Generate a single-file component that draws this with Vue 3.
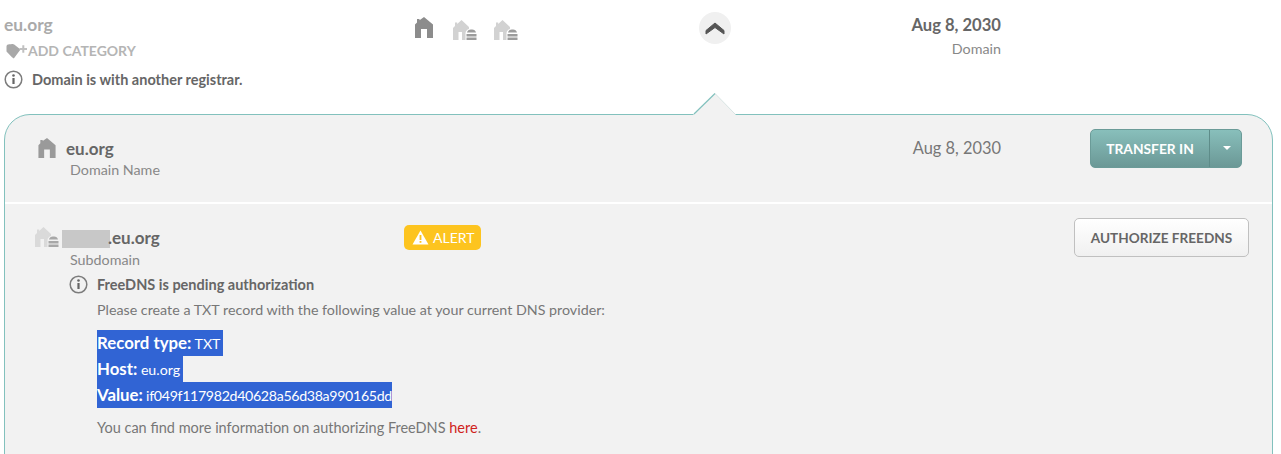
<script setup>
const homePath = 'M0 21V7.500L2 5.500V2h2.500v1.200L9 0l9 7.500V21h-6v-9H6v9z'
const housePath = 'M0 20V8L2 6V2.500h2.200V4L8.500 0 16 7v2c-2 .5-3.200 2-3.500 4v7H9v-8H5.500v8z'
const stackPath = 'M14 12.500c.4-1.800 2-3 3.800-3h1.400c1.800 0 3.400 1.200 3.800 3zM13.500 14h10v2.500h-10zM13.500 17.500h10V20h-10z'
const records = [
  { label: 'Record type:', value: 'TXT' },
  { label: 'Host:', value: 'eu.org' },
  { label: 'Value:', value: 'if049f117982d40628a56d38a990165dd' }
]
</script>

<template>
  <div class="page">
    <div class="summary">
      <div class="summary-name">
        <div class="domain">eu.org</div>
        <div class="add-category">
          <svg width="22" height="15" viewBox="0 0 22 15">
            <path d="M.5 2.500C.5 1 1.800.3 3.200.3h2c.9-.5 2.100-.4 3 .3l6.300 4.900-6.700 9-1.800-1.300L.5 7.500z" fill="#a8a8a8" />
            <path d="M13.500 5h7.500M17.300 1.300v7.500" stroke="#c0c0c0" stroke-width="2" fill="none" />
          </svg>
          <span>ADD CATEGORY</span>
        </div>
        <div class="notice">
          <svg class="info" width="19" height="19" viewBox="0 0 19 19">
            <circle cx="9.500" cy="9.500" r="8.300" fill="none" stroke="#7d7d7d" stroke-width="1.500" />
            <rect x="8.400" y="8" width="2.200" height="6" fill="#666" />
            <circle cx="9.500" cy="5.500" r="1.300" fill="#666" />
          </svg>
          <span>Domain is with another registrar.</span>
        </div>
      </div>
      <div class="summary-icons">
        <svg width="18" height="21" viewBox="0 0 18 21"><path :d="homePath" fill="#8c8c8c" /></svg>
        <svg v-for="n in 2" :key="n" class="sub-icon" width="26" height="20" viewBox="0 0 24 20">
          <path :d="housePath" fill="#d2d2d2" />
          <path :d="stackPath" fill="#9c9c9c" />
        </svg>
      </div>
      <button class="collapse">
        <svg width="20" height="13" viewBox="0 0 20 13">
          <path d="M10 1l9 7.500v3.500L10 5.500 1 12V8.500z" fill="#555" stroke="#555" stroke-linejoin="round" />
        </svg>
      </button>
      <div class="summary-expiry">
        <div class="date">Aug 8, 2030</div>
        <div class="kind">Domain</div>
      </div>
    </div>

    <div class="panel">
      <svg class="notch" width="44" height="22" viewBox="0 0 44 22">
        <path d="M0 22L22 .5 43 22z" fill="#f2f2f2" />
        <path d="M22 .5L42 21" fill="none" stroke="#d8e4e3" />
        <path d="M1 21L22 .5" fill="none" stroke="#82c1bd" stroke-width="1.200" />
      </svg>
      <div class="section section-domain">
        <div class="name-col">
          <div class="name-line">
            <svg width="18" height="20" viewBox="0 0 18 21"><path :d="homePath" fill="#9a9a9a" /></svg>
            <span class="name">eu.org</span>
          </div>
          <div class="kind kind-indent">Domain Name</div>
        </div>
        <div class="panel-date">Aug 8, 2030</div>
        <div class="split-button">
          <span class="split-main">TRANSFER IN</span>
          <span class="split-caret"></span>
        </div>
      </div>

      <div class="section section-sub">
        <div class="sub-head">
          <div class="name-col sub-name">
            <div class="name-line">
              <svg width="26" height="20" viewBox="0 0 24 20">
                <path :d="housePath" fill="#dadada" />
                <path :d="stackPath" fill="#a8a8a8" />
              </svg>
              <span class="name"><span class="redacted"></span>.eu.org</span>
            </div>
            <div class="kind kind-sub">Subdomain</div>
          </div>
          <div class="alert">
            <svg width="17" height="15" viewBox="0 0 17 15">
              <path d="M8.500 .5l8 14H.5z" fill="#fff" />
              <rect x="7.600" y="5" width="1.800" height="5" fill="#fdc41f" />
              <rect x="7.600" y="11" width="1.800" height="1.800" fill="#fdc41f" />
            </svg>
            <span>ALERT</span>
          </div>
          <button class="authorize">AUTHORIZE FREEDNS</button>
        </div>

        <div class="pending">
          <svg class="info" width="19" height="19" viewBox="0 0 19 19">
            <circle cx="9.500" cy="9.500" r="8.300" fill="none" stroke="#7d7d7d" stroke-width="1.500" />
            <rect x="8.400" y="8" width="2.200" height="6" fill="#666" />
            <circle cx="9.500" cy="5.500" r="1.300" fill="#666" />
          </svg>
          <div class="pending-body">
            <div class="pending-title">FreeDNS is pending authorization</div>
            <p class="pending-text">Please create a TXT record with the following value at your current DNS provider:</p>
            <div class="records">
              <div v-for="r in records" :key="r.label" class="record">
                <b>{{ r.label }}</b> {{ r.value }}
              </div>
            </div>
            <p class="pending-more">You can find more information on authorizing FreeDNS <a class="link">here</a>.</p>
          </div>
        </div>
      </div>
    </div>
  </div>
</template>

<style>
html, body {
  margin: 0;
  background: #fff;
  overflow: hidden;
}
</style>

<style scoped>
.page {
  width: 1281px;
  height: 454px;
  overflow: hidden;
  font-family: Lato, "Open Sans", sans-serif;
  color: #777;
  font-size: 14px;
}

.summary {
  display: flex;
  height: 114px;
  padding-left: 4px;
  box-sizing: border-box;
}

.summary-name {
  width: 410px;
  padding-top: 15px;
}

.domain {
  font-size: 17.400px;
  font-weight: 700;
  line-height: 20px;
  color: #aaa;
}

.add-category {
  display: flex;
  align-items: center;
  margin-top: 7px;
  padding-left: 2px;
  font-size: 14px;
  font-weight: 700;
  line-height: 18px;
  color: #b5b5b5;
}

.notice {
  display: flex;
  align-items: center;
  gap: 9px;
  margin-top: 10px;
  font-weight: 700;
  font-size: 14.500px;
  color: #666;
}

.summary-icons {
  display: flex;
  align-items: flex-start;
  width: 284px;
  margin-left: 1px;
  padding-top: 17px;
}

.sub-icon {
  margin: 3px 0 0 19px;
}

.sub-icon + .sub-icon {
  margin-left: 15px;
}

.collapse {
  width: 32px;
  height: 32px;
  margin-top: 12px;
  padding: 0;
  border: 0;
  border-radius: 50%;
  background: #f0f0f0;
  display: flex;
  align-items: center;
  justify-content: center;
}

.summary-expiry {
  width: 270px;
  padding-top: 15px;
  text-align: right;
}

.date {
  font-size: 16.600px;
  font-weight: 700;
  line-height: 20px;
  color: #666;
}

.kind {
  font-size: 14.300px;
  line-height: 18px;
  margin-top: 5px;
  color: #888;
}

.panel {
  position: relative;
  width: 1269px;
  margin-left: 4px;
  box-sizing: border-box;
  height: 400px;
  background: #f2f2f2;
  border: 1px solid #82c1bd;
  border-radius: 26px 26px 0 0;
}

.notch {
  position: absolute;
  top: -22px;
  left: 688px;
}

.section-domain {
  display: flex;
  align-items: flex-start;
  height: 89px;
  box-sizing: border-box;
  border-bottom: 2px solid #fff;
  padding: 21px 30px 0 33px;
}

.name-col {
  width: 380px;
}

.name-line {
  display: flex;
  align-items: center;
  height: 24px;
}

.name {
  font-size: 17px;
  font-weight: 700;
  color: #666;
  margin-left: 10px;
}

.kind-indent {
  margin: 1px 0 0 32px;
}

.panel-date {
  flex: 1;
  text-align: right;
  font-size: 16.400px;
  line-height: 24px;
  padding: 0 89px 0 0;
  color: #777;
}

.split-button {
  display: flex;
  width: 152px;
  height: 39px;
  margin-top: -7px;
  border: 1px solid #6b9b98;
  box-sizing: border-box;
  border-radius: 5px;
  background: linear-gradient(#88bfbb, #6b9896);
  color: #fff;
  font-size: 13.800px;
  font-weight: 700;
  line-height: 37px;
}

.split-main {
  width: 118px;
  text-align: center;
  border-right: 1px solid #5e8c89;
}

.split-caret {
  width: 0;
  height: 0;
  margin: 16px 0 0 13px;
  border: 4px solid transparent;
  border-top-color: #fff;
  border-bottom: 0;
}

.section-sub {
  padding: 14px 23px 0 29px;
}

.sub-head {
  display: flex;
  align-items: flex-start;
  height: 53px;
}

.sub-name {
  width: 370px;
  padding-top: 7px;
}

.sub-name .name {
  margin-left: 2px;
}

.sub-name svg {
  flex-shrink: 0;
}

.redacted {
  display: inline-block;
  width: 48px;
  height: 18px;
  margin-right: -2px;
  vertical-align: -4px;
  background: #c8c8c8;
}

.kind-sub {
  margin: 2px 0 0 36px;
}

.alert {
  display: flex;
  align-items: center;
  gap: 4px;
  width: 77px;
  height: 25px;
  margin-top: 7px;
  padding-left: 8px;
  box-sizing: border-box;
  border-radius: 5px;
  background: #fdc41f;
  color: #fff;
  font-size: 14px;
}

.authorize {
  margin-left: auto;
  width: 175px;
  height: 39px;
  border: 1px solid #c0c0c0;
  border-radius: 5px;
  background: linear-gradient(#fff, #f0f0f0);
  color: #666;
  font-family: inherit;
  font-size: 13.600px;
  font-weight: 700;
}

.pending {
  display: flex;
  gap: 9px;
  margin: 4px 0 0 35px;
}

.pending-title {
  font-size: 14.500px;
  font-weight: 700;
  line-height: 19px;
  color: #666;
}

.pending-text {
  margin: 6px 0 0;
  font-size: 14.280px;
  line-height: 19px;
  color: #777;
}

.records {
  margin-top: 11px;
}

.record {
  width: fit-content;
  background: #3164d4;
  color: #fff;
  font-size: 14.200px;
  line-height: 25px;
  padding-right: 3px;
}

.record:last-child {
  letter-spacing: -.33px;
  padding-right: 0;
}

.record b {
  font-size: 16.800px;
  letter-spacing: 0;
}

.pending-more {
  margin: 10px 0 0;
  font-size: 14.500px;
  line-height: 19px;
  color: #777;
}

.link {
  color: #d0231c;
}
</style>
